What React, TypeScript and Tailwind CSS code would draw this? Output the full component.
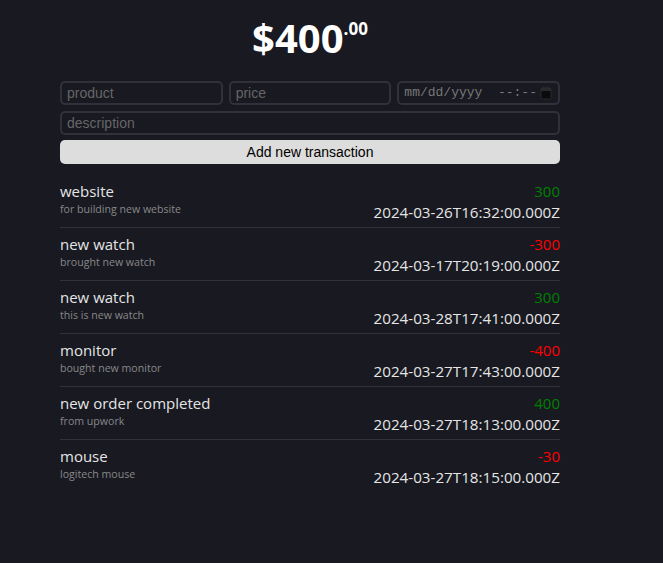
const transactions = [
  { name: "website", desc: "for building new website", price: 300, date: "2024-03-26T16:32:00.000Z" },
  { name: "new watch", desc: "brought new watch", price: -300, date: "2024-03-17T20:19:00.000Z" },
  { name: "new watch", desc: "this is new watch", price: 300, date: "2024-03-28T17:41:00.000Z" },
  { name: "monitor", desc: "bought new monitor", price: -400, date: "2024-03-27T17:43:00.000Z" },
  { name: "new order completed", desc: "from upwork", price: 400, date: "2024-03-27T18:13:00.000Z" },
  { name: "mouse", desc: "logitech mouse", price: -30, date: "2024-03-27T18:15:00.000Z" },
];

const boxCls = "h-[24px] bg-transparent border-2 border-[#30313b] rounded-[5px] px-[5px]";
const inputCls =
  boxCls +
  " w-full min-w-0 text-[14px] text-[#ddd] placeholder:text-[#666] outline-none font-['Liberation_Sans',Arial,sans-serif]";

export default function App() {
  return (
    <div className="min-h-[563px] w-full bg-[#181921] text-[#ddd] font-['Open_Sans','Noto_Sans',sans-serif]">
      <main className="w-[500px] ml-[60px] pt-[12px]">
        {/* balance */}
        <h1 className="text-center font-bold text-[40px] leading-[52px] text-white">
          $400<span className="text-[17px] align-top relative top-[-9px]">.00</span>
        </h1>

        {/* form */}
        <form className="mt-[17px] flex flex-col gap-[6px]" onSubmit={(e) => e.preventDefault()}>
          <div className="grid grid-cols-3 gap-[6px]">
            <input className={inputCls} placeholder="product" />
            <input className={inputCls} placeholder="price" />
            <div className={boxCls + " flex items-center justify-between"}>
              <span className="text-[13px] text-[#777] font-['Liberation_Mono','DejaVu_Sans_Mono',monospace] whitespace-pre">
                mm/dd/yyyy  --:--
              </span>
              <svg width="12" height="14" viewBox="0 0 12 14" className="mr-[1px] shrink-0">
                <rect x="1" y="2" width="10" height="11" rx="1.5" fill="#0b0b0e" stroke="#2a2a2e" />
                <rect x="1" y="2" width="10" height="3" fill="#2a2a2e" />
                <rect x="3" y="0.5" width="1.5" height="3" fill="#2a2a2e" />
                <rect x="7.5" y="0.5" width="1.5" height="3" fill="#2a2a2e" />
              </svg>
            </div>
          </div>
          <input className={inputCls} placeholder="description" />
          <button className="h-[24px] mt-[-1px] w-full bg-[#ddd] rounded-[5px] text-[14px] text-black font-['Liberation_Sans',Arial,sans-serif]">
            Add new transaction
          </button>
        </form>

        {/* transactions */}
        <div className="mt-[16px]">
          {transactions.map((t, i) => {
            const last = i === transactions.length - 1;
            return (
              <div
                key={i}
                className={`flex justify-between pt-[1px] ${last ? "h-[53px]" : "h-[48px] mb-[5px] border-b border-[#30313b]"}`}
              >
                <div>
                  <div className="text-[15px] leading-[21px] text-[#e5e5e5]">{t.name}</div>
                  <div className="text-[10.6px] leading-[15px] text-[#888]">{t.desc}</div>
                </div>
                <div className="text-right">
                  <div className={`text-[15px] leading-[21px] ${t.price < 0 ? "text-[#ff0000]" : "text-[#008000]"}`}>
                    {t.price}
                  </div>
                  <div className="text-[15.2px] leading-[21px] text-[#e5e5e5]">{t.date}</div>
                </div>
              </div>
            );
          })}
        </div>
      </main>
    </div>
  );
}
